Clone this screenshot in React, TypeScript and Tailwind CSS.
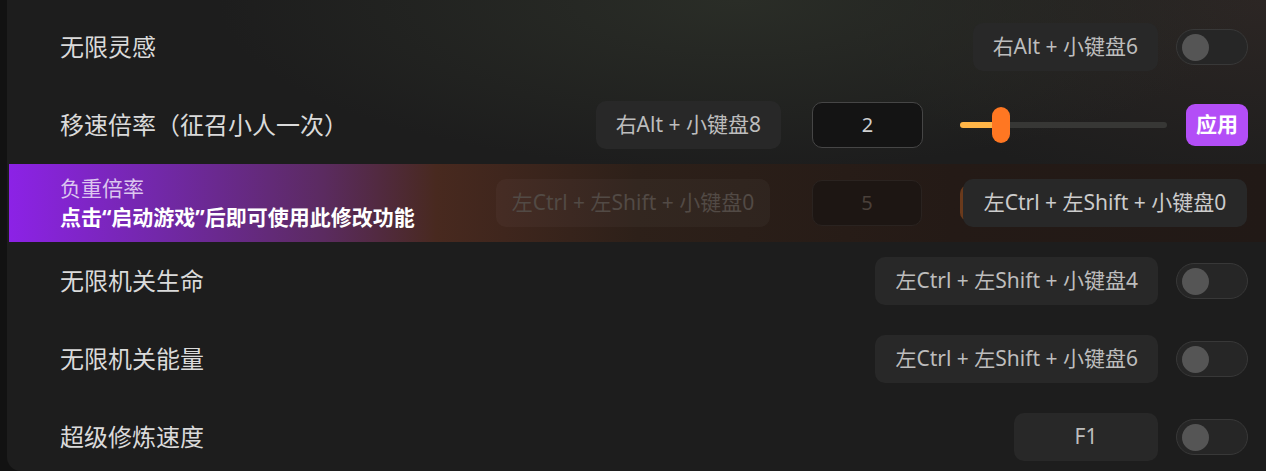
import React from "react";

const FONT = "font-['Noto_Sans','Noto_Sans_CJK_SC',sans-serif]";

function KeyChip({ label, className = "" }: { label: string; className?: string }) {
  return (
    <div
      className={`flex h-[48px] items-center justify-center rounded-[10px] bg-[#282828] px-[20px] text-[21px] text-[#bdbdbd] whitespace-nowrap ${className}`}
    >
      {label}
    </div>
  );
}

function Toggle() {
  return (
    <div className="flex h-[36px] w-[72px] shrink-0 items-center rounded-full border border-[#383838] bg-[#262626] pl-[5px]">
      <div className="h-[27px] w-[27px] rounded-full bg-[#555555]" />
    </div>
  );
}

function ToggleRow({ title, hotkey, chipClass }: { title: string; hotkey: string; chipClass?: string }) {
  return (
    <div className="flex h-[78px] shrink-0 items-center pl-[53px] pr-[18px]">
      <span className="text-[24px] text-[#dadada]">{title}</span>
      <div className="ml-auto flex items-center gap-[18px]">
        <KeyChip label={hotkey} className={chipClass} />
        <Toggle />
      </div>
    </div>
  );
}

export default function App() {
  return (
    <div className={`flex h-[471px] w-full overflow-hidden bg-[#121212] ${FONT}`}>
      <div className="w-[7px] shrink-0" />

      <div className="flex flex-1 flex-col overflow-hidden rounded-bl-[14px] bg-[#1d1d1d] bg-[radial-gradient(ellipse_520px_170px_at_58%_0%,#2a2d27,transparent),radial-gradient(ellipse_420px_200px_at_100%_0%,#2c2624,transparent)] pt-[8px]">
        {/* 无限灵感 */}
        <ToggleRow title="无限灵感" hotkey="右Alt + 小键盘6" chipClass="bg-[#2f302d]" />

        {/* 移速倍率 */}
        <div className="flex h-[78px] shrink-0 items-center pl-[53px] pr-[18px]">
          <span className="text-[24px] text-[#dadada]">移速倍率（征召小人一次）</span>
          <div className="ml-auto flex items-center">
            <KeyChip label="右Alt + 小键盘8" className="bg-[#2b2b29]" />
            <div className="ml-[31px] flex h-[46px] w-[111px] items-center justify-center rounded-[10px] border border-[#464646] bg-[#141414] text-[20px] text-[#cfcfcf]">
              2
            </div>
            <div className="ml-[37px] flex h-[36px] w-[207px] items-center">
              <div className="h-[6px] w-[32px] rounded-l-full bg-[#ffb547]" />
              <div className="h-[36px] w-[18px] shrink-0 rounded-full bg-[#ff7722]" />
              <div className="h-[6px] flex-1 rounded-r-full bg-[#373735]" />
            </div>
            <button className="ml-[19px] flex h-[42px] w-[62px] items-center justify-center rounded-[9px] bg-[#b34ef7] text-[21px] font-bold text-white">
              应用
            </button>
          </div>
        </div>

        {/* 负重倍率 - disabled band */}
        <div className="ml-[2px] flex h-[78px] shrink-0 items-center bg-[linear-gradient(90deg,#8c22e6_0%,#7228a8_12%,#5b2b60_25%,#48291f_34%,#2d2019_50%,#241a16_75%,#211916_100%)] pl-[51px] pr-[19px]">
          <div className="flex flex-col leading-[29px]">
            <span className="text-[21px] text-[#dcc6ef]">负重倍率</span>
            <span className="text-[21px] font-bold text-white">点击“启动游戏”后即可使用此修改功能</span>
          </div>
          <div className="ml-auto flex items-center">
            <div className="flex h-[48px] w-[274px] items-center justify-center rounded-[10px] bg-[#ffffff08] text-[21px] text-[#524a45] whitespace-nowrap">
              左Ctrl + 左Shift + 小键盘0
            </div>
            <div className="ml-[42px] flex h-[46px] w-[110px] items-center justify-center rounded-[10px] border border-[#2a2320] bg-[#1d1613] text-[20px] text-[#4a403a]">
              5
            </div>
            <div className="relative ml-[38px] flex items-center">
              <div className="absolute left-0 top-1/2 h-[36px] w-[17px] -translate-y-1/2 rounded-full bg-[#6a3a1c]" />
              <KeyChip
                label="左Ctrl + 左Shift + 小键盘0"
                className="relative ml-[3px] w-[284px] bg-[#2e2724] text-[#cccccc]"
              />
            </div>
          </div>
        </div>

        <ToggleRow title="无限机关生命" hotkey="左Ctrl + 左Shift + 小键盘4" />
        <ToggleRow title="无限机关能量" hotkey="左Ctrl + 左Shift + 小键盘6" />
        <ToggleRow title="超级修炼速度" hotkey="F1" chipClass="w-[144px]" />
      </div>
    </div>
  );
}
